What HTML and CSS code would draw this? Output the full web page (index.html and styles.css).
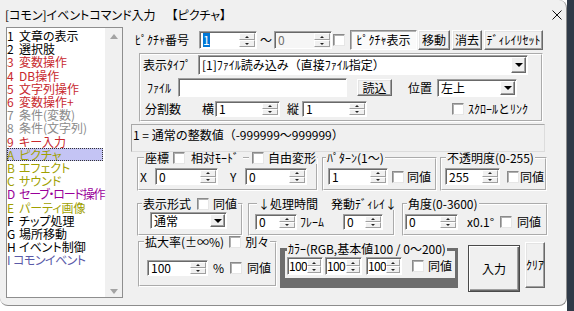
FILE: index.html
```html
<!DOCTYPE html>
<html lang="ja">
<head>
    <meta charset="UTF-8">
    <title>[コモン]イベントコマンド入力 【ピクチャ】</title>
    <link rel="stylesheet" href="styles.css">
</head>
<body>
    <div class="window">
        <div class="titlebar">
            <span class="title">[コモン]イベントコマンド入力<span class="sub">【ピクチャ】</span></span>
            <svg class="close" width="10" height="10" viewBox="0 0 10 10"><path d="M0.5 0.5L9.5 9.5M9.5 0.5L0.5 9.5" stroke="#111" stroke-width="1"/></svg>
        </div>
        <div class="client">
            <div class="cmdlist">
                <div class="items">
                    <div class="item"><span class="key">1</span>文章の表示</div>
                    <div class="item"><span class="key">2</span>選択肢</div>
                    <div class="item red"><span class="key">3</span>変数操作</div>
                    <div class="item red"><span class="key">4</span>DB操作</div>
                    <div class="item red"><span class="key">5</span>文字列操作</div>
                    <div class="item red"><span class="key">6</span>変数操作+</div>
                    <div class="item gray"><span class="key">7</span>条件(変数)</div>
                    <div class="item gray"><span class="key">8</span>条件(文字列)</div>
                    <div class="item red"><span class="key">9</span>キー入力</div>
                    <div class="item olive sel"><span class="key">A</span>ピクチャ</div>
                    <div class="item olive"><span class="key">B</span>エフェクト</div>
                    <div class="item olive"><span class="key">C</span>サウンド</div>
                    <div class="item purple"><span class="key">D</span><span class="tighter">セーブ・ロード操作</span></div>
                    <div class="item olive"><span class="key">E</span>パーティ画像</div>
                    <div class="item"><span class="key">F</span>チップ処理</div>
                    <div class="item"><span class="key">G</span>場所移動</div>
                    <div class="item"><span class="key">H</span>イベント制御</div>
                    <div class="item blue"><span class="key narrow">I</span><span class="tight">コモンイベント</span></div>
                </div>
                <div class="scrollbar"><span class="arrow-up"></span><span class="arrow-down"></span></div>
            </div>

            <div class="panel">
                <div class="row row-no">
                    <span class="lbl lbl-no">ﾋﾟｸﾁｬ番号</span>
                    <div class="spin spin-no"><span class="val"><span class="hl">1</span></span><span class="updown"><i></i><i></i></span></div>
                    <span class="lbl tilde">～</span>
                    <div class="spin spin-to off"><span class="val">0</span><span class="updown"><i></i><i></i></span></div>
                    <span class="chk chk-to"></span>
                    <span class="btn on btn-show">ﾋﾟｸﾁｬ表示</span>
                    <span class="btn btn-move">移動</span>
                    <span class="btn btn-erase">消去</span>
                    <span class="btn btn-reset">ﾃﾞｨﾚｲﾘｾｯﾄ</span>
                </div>

                <div class="group-type">
                    <div class="row row-type">
                        <span class="lbl lbl-type">表示ﾀｲﾌﾟ</span>
                        <div class="combo combo-type"><span class="val">[1]ﾌｧｲﾙ読み込み（直接ﾌｧｲﾙ指定）</span><span class="drop"></span></div>
                    </div>
                    <div class="row row-file">
                        <span class="lbl lbl-file">ﾌｧｲﾙ</span>
                        <div class="edit edit-file"></div>
                        <span class="btn btn-load">読込</span>
                        <span class="lbl lbl-pos">位置</span>
                        <div class="combo combo-pos"><span class="val">左上</span><span class="drop"></span></div>
                    </div>
                    <div class="row row-split">
                        <span class="lbl lbl-split">分割数</span>
                        <span class="lbl lbl-x">横</span>
                        <div class="spin spin-split"><span class="val">1</span><span class="updown"><i></i><i></i></span></div>
                        <span class="lbl lbl-y">縦</span>
                        <div class="spin spin-split"><span class="val">1</span><span class="updown"><i></i><i></i></span></div>
                        <span class="chk chk-scroll"></span>
                        <span class="lbl lbl-scroll">ｽｸﾛｰﾙとﾘﾝｸ</span>
                    </div>
                </div>

                <div class="desc">1 = 通常の整数値（-999999～999999）</div>

                <div class="row row-a">
                    <fieldset class="grp grp-coord">
                        <legend>座標<span class="chk lg-chk1"></span><span class="lg-rel">相対ﾓｰﾄﾞ</span><span class="seg"></span><span class="chk lg-chk2"></span><span class="lg-free">自由変形</span></legend>
                        <div class="grp-body">
                            <span class="lbl lbl-cx">X</span>
                            <div class="spin spin-cx"><span class="val">0</span><span class="updown"><i></i><i></i></span></div>
                            <span class="lbl lbl-cy">Y</span>
                            <div class="spin spin-cy"><span class="val">0</span><span class="updown"><i></i><i></i></span></div>
                        </div>
                    </fieldset>
                    <fieldset class="grp grp-pat">
                        <legend>ﾊﾟﾀｰﾝ(1～)</legend>
                        <div class="grp-body">
                            <div class="spin spin-pat"><span class="val">1</span><span class="updown"><i></i><i></i></span></div>
                            <span class="chk chk-same"></span>
                            <span class="lbl lbl-same">同値</span>
                        </div>
                    </fieldset>
                    <fieldset class="grp grp-alpha">
                        <legend>不透明度(0-255)</legend>
                        <div class="grp-body">
                            <div class="spin spin-alpha"><span class="val">255</span><span class="updown"><i></i><i></i></span></div>
                            <span class="chk chk-alpha"></span>
                            <span class="lbl lbl-same-a">同値</span>
                        </div>
                    </fieldset>
                </div>

                <div class="row row-b">
                    <fieldset class="grp grp-mode">
                        <legend>表示形式<span class="chk lg-chk-mode"></span><span class="lg-same">同値</span></legend>
                        <div class="grp-body">
                            <div class="combo combo-mode"><span class="val">通常</span><span class="drop"></span></div>
                        </div>
                    </fieldset>
                    <fieldset class="grp grp-wait">
                        <legend>↓処理時間<span class="lg-delay">発動ﾃﾞｨﾚｲ↓</span></legend>
                        <div class="grp-body">
                            <div class="spin spin-wait"><span class="val">0</span><span class="updown"><i></i><i></i></span></div>
                            <span class="lbl lbl-frame">ﾌﾚｰﾑ</span>
                            <div class="spin spin-delay"><span class="val">0</span><span class="updown"><i></i><i></i></span></div>
                        </div>
                    </fieldset>
                    <fieldset class="grp grp-angle">
                        <legend>角度(0-3600)</legend>
                        <div class="grp-body">
                            <div class="spin spin-angle"><span class="val">0</span><span class="updown"><i></i><i></i></span></div>
                            <span class="lbl lbl-unit">x0.1°</span>
                            <span class="chk"></span>
                            <span class="lbl lbl-same-g">同値</span>
                        </div>
                    </fieldset>
                </div>

                <div class="row row-c">
                    <fieldset class="grp grp-zoom">
                        <legend>拡大率(±∞%)<span class="chk lg-chk-zoom"></span><span class="lg-sep">別々</span></legend>
                        <div class="grp-body">
                            <div class="spin spin-zoom"><span class="val">100</span><span class="updown"><i></i><i></i></span></div>
                            <span class="lbl lbl-pct">%</span>
                            <span class="chk chk-zoom"></span>
                            <span class="lbl lbl-same-z">同値</span>
                        </div>
                    </fieldset>
                    <fieldset class="grp-color">
                        <legend>ｶﾗｰ(RGB,基本値100 / 0～200)</legend>
                        <div class="grp-body">
                            <div class="spin spin-rgb"><span class="val">100</span><span class="updown"><i></i><i></i></span></div>
                            <div class="spin spin-rgb rgb-g"><span class="val">100</span><span class="updown"><i></i><i></i></span></div>
                            <div class="spin spin-rgb rgb-b"><span class="val">100</span><span class="updown"><i></i><i></i></span></div>
                            <span class="chk chk-rgb"></span>
                            <span class="lbl lbl-same-c">同値</span>
                        </div>
                    </fieldset>
                    <span class="btn btn-ok">入力</span>
                    <span class="btn btn-clear">ｸﾘｱ</span>
                </div>
            </div>
        </div>
    </div>
</body>
</html>
```

FILE: styles.css
```css
* {
    box-sizing: border-box;
}
body {
    margin: 0;
    background: linear-gradient(to right, #ffffff 567px, #2f3a48 567px);
    font-family: "Noto Sans CJK JP", "Noto Sans", sans-serif;
    font-size: 12px;
    line-height: 14px;
    color: #000;
}
.window {
    width: 567px;
    height: 306px;
    background: #f0f0f0;
    border-right: 1px solid #8c8c8c;
    border-bottom: 1px solid #8c8c8c;
    border-radius: 0 8px 8px 8px;
    overflow: hidden;
}
.titlebar {
    display: flex;
    align-items: center;
    justify-content: space-between;
    height: 27px;
    padding: 3px 4px 0 5px;
}
.title {
    font-feature-settings: "palt";
}
.title .sub {
    margin-left: 16px;
}
.client {
    display: flex;
    padding-left: 6px;
}

/* command list */
.cmdlist {
    display: flex;
    width: 117px;
    height: 271px;
    border: 1px solid #8e8e8e;
}
.items {
    flex: 1;
    min-width: 0;
    padding-top: 1px;
    background: #fff;
    font-size: 12px;
    line-height: 13.2px;
    font-feature-settings: "palt";
    white-space: nowrap;
}
.item .key {
    display: inline-block;
    width: 12px;
}
.item .key.narrow {
    width: 6px;
}
.item .tight {
    letter-spacing: -0.5px;
}
.item .tighter {
    letter-spacing: -1.2px;
}
.item.sel {
    background: #c4c4f4;
    outline: 1px dotted #333;
    outline-offset: -1px;
    margin-right: 2px;
}
.red { color: #c8282d; }
.gray { color: #8a8a8a; }
.olive { color: #a0a000; }
.purple { color: #990099; }
.blue { color: #5a5aa8; }
.scrollbar {
    width: 17px;
    display: flex;
    flex-direction: column;
    justify-content: space-between;
    align-items: center;
    padding: 6px 0 3px;
}
.arrow-up,
.arrow-down {
    border-left: 4px solid transparent;
    border-right: 4px solid transparent;
}
.arrow-up { border-bottom: 5px solid #a3a3a3; }
.arrow-down { border-top: 5px solid #a3a3a3; }

/* controls */
.panel {
    width: 417px;
    margin-left: 8px;
    padding-top: 3px;
    display: flex;
    flex-direction: column;
}
.row {
    display: flex;
    align-items: center;
}
.lbl {
    white-space: nowrap;
}
.spin,
.combo,
.edit {
    display: flex;
    background: #fff;
    border: 1px solid;
    border-color: #a0a0a0 #fff #fff #a0a0a0;
    box-shadow: inset 1px 1px #696969;
}
.spin {
    height: 18px;
}
.spin .val,
.combo .val {
    flex: 1;
    display: flex;
    align-items: center;
    padding-left: 3px;
    line-height: 12px;
    white-space: nowrap;
}
.combo .val {
    overflow: hidden;
}
.spin.off {
    background: #f6f6f6;
    color: #707070;
}
.hl {
    background: #0078d7;
    color: #fff;
    padding: 1px 0;
}
.updown {
    width: 16px;
    margin: 1px 1px 1px 0;
    display: flex;
    flex-direction: column;
}
.updown i {
    flex: 1;
    display: flex;
    align-items: center;
    justify-content: center;
    background: #f0f0f0;
    border: 1px solid;
    border-color: #fff #a0a0a0 #a0a0a0 #fff;
}
.updown i::after {
    content: "";
    border-left: 2px solid transparent;
    border-right: 2px solid transparent;
    border-bottom: 2px solid #222;
}
.updown i + i::after {
    border-bottom: 0;
    border-top: 2px solid #222;
}
.combo {
    height: 20px;
}
.drop {
    width: 15px;
    margin: 1px;
    display: flex;
    align-items: center;
    justify-content: center;
    background: #f0f0f0;
    border: 1px solid;
    border-color: #fff #696969 #696969 #fff;
    box-shadow: inset -1px -1px #a0a0a0;
}
.drop::after {
    content: "";
    border-left: 4px solid transparent;
    border-right: 4px solid transparent;
    border-top: 4px solid #000;
}
.chk {
    display: inline-block;
    flex-shrink: 0;
    width: 12px;
    height: 12px;
    background: #fff;
    border: 1px solid;
    border-color: #8a8a8a #e6e6e6 #e6e6e6 #8a8a8a;
    box-shadow: inset 1px 1px #b0b0b0;
}
.btn {
    display: flex;
    align-items: center;
    justify-content: center;
    height: 20px;
    background: #f0f0f0;
    border: 1px solid;
    border-color: #fff #696969 #696969 #fff;
    box-shadow: inset -1px -1px #a0a0a0, inset 1px 1px #e3e3e3;
    white-space: nowrap;
}
.btn.on {
    background: #fafafa;
    border-color: #8a8a8a #fff #fff #8a8a8a;
    box-shadow: inset 1px 1px #b4b4b4;
}

/* row 1 */
.row-no { height: 20px; }
.lbl-no { margin-left: 4px; width: 64px; }
.spin-no, .spin-to { width: 58px; }
.tilde { margin-left: 3px; width: 14px; }
.chk-to { margin-left: 1px; }
.btn-show { margin-left: 5px; width: 67px; }
.btn-move { margin-left: 1px; width: 32px; }
.btn-erase { margin-left: 2px; width: 30px; }
.btn-reset { margin-left: 2px; width: 59px; }

/* display type group */
.group-type {
    display: flex;
    flex-direction: column;
    width: 404px;
    height: 69px;
    margin: 3px 0 0 8px;
    border: 2px groove #fff;
}
.row-type { height: 20px; }
.lbl-type { margin-left: 2px; width: 55px; }
.combo-type { width: 330px; }
.row-file { height: 19px; margin-top: 3px; }
.lbl-file { margin-left: 6px; width: 31px; }
.edit-file { width: 169px; height: 19px; }
.btn-load { margin-left: 10px; width: 35px; height: 17px; }
.lbl-pos { margin-left: 16px; width: 29px; }
.combo-pos { width: 80px; height: 18px; }
.row-split { height: 16px; margin-top: 4px; }
.lbl-split { margin-left: 4px; width: 57px; }
.lbl-x { width: 13px; }
.spin-split { width: 65px; height: 16px; }
.lbl-y { margin-left: 7px; width: 15px; }
.chk-scroll { margin-left: 85px; }
.lbl-scroll { margin-left: 4px; }

.desc {
    width: 414px;
    height: 28px;
    margin-top: 2px;
    padding: 3px 0 0 1px;
    border: 1px solid;
    border-color: #a8a8a8 #dcdcdc #dcdcdc #a8a8a8;
    white-space: nowrap;
}

/* group boxes */
.grp {
    margin: 0;
    padding: 0;
    min-width: 0;
    border: 2px groove #fff;
}
.grp legend,
.grp-color legend {
    display: flex;
    align-items: center;
    height: 12px;
    line-height: 12px;
    padding: 0 1px;
    white-space: nowrap;
}
.grp-body {
    display: flex;
    align-items: center;
}
.row-a,
.row-b,
.row-c {
    align-items: flex-start;
}

.grp-coord { width: 181px; height: 39px; margin-left: 6px; }
.grp-coord legend { margin-left: 5px; }
.lg-chk1 { margin-left: 4px; }
.lg-rel { margin-left: 6px; }
.seg {
    width: 6px;
    height: 2px;
    margin: 0 3px 0 4px;
    border-top: 1px solid #aaa;
    border-bottom: 1px solid #fff;
}
.lg-free { margin-left: 4px; }
.grp-coord .grp-body { padding-top: 4px; }
.lbl-cx { margin-left: 1px; width: 15px; }
.spin-cx { width: 63px; height: 17px; }
.lbl-cy { margin-left: 12px; width: 15px; }
.spin-cy { width: 62px; height: 17px; }

.grp-pat { width: 115px; height: 39px; margin-left: 4px; }
.grp-pat legend { margin-left: 2px; }
.grp-pat .grp-body { padding-top: 4px; }
.spin-pat { width: 60px; height: 17px; margin-left: 4px; }
.chk-same { margin-left: 4px; }
.lbl-same { margin-left: 3px; }

.grp-alpha { width: 107px; height: 39px; margin-left: 3px; }
.grp-alpha legend { margin-left: 4px; }
.grp-alpha .grp-body { padding-top: 4px; }
.spin-alpha { width: 55px; height: 17px; margin-left: 3px; }
.chk-alpha { margin-left: 7px; }
.lbl-same-a { margin-left: 1px; }

.row-b { margin-top: 7px; }
.grp-mode { width: 106px; height: 38px; margin-left: 6px; }
.grp-mode legend { margin-left: 3px; }
.lg-chk-mode { margin-left: 6px; }
.lg-same { margin-left: 4px; }
.grp-mode .grp-body { padding-top: 2px; }
.combo-mode { width: 77px; height: 17px; margin-left: 11px; }

.grp-wait { width: 147px; height: 38px; margin-left: 5px; }
.grp-wait legend { margin-left: 7px; }
.lg-delay { margin-left: 13px; }
.grp-wait .grp-body { padding-top: 4px; }
.spin-wait { width: 42px; height: 16px; margin-left: 5px; }
.lbl-frame { margin-left: 3px; width: 24px; }
.spin-delay { width: 40px; height: 16px; margin-left: 19px; }

.grp-angle { width: 146px; height: 38px; margin-left: 7px; }
.grp-angle legend { margin-left: 3px; }
.grp-angle .grp-body { padding-top: 4px; }
.spin-angle { width: 53px; height: 16px; margin-left: 1px; }
.lbl-unit { margin-left: 9px; width: 33px; }
.lbl-same-g { margin-left: 5px; }

.grp-zoom { width: 139px; height: 51px; margin-left: 7px; }
.grp-zoom legend { margin-left: 4px; }
.lg-chk-zoom { margin-left: 5px; }
.lg-sep { margin-left: 4px; }
.grp-zoom .grp-body { padding-top: 12px; }
.spin-zoom { width: 61px; height: 16px; margin-left: 7px; }
.lbl-pct { margin-left: 5px; width: 12px; }
.chk-zoom { margin-left: 5px; }
.lbl-same-z { margin-left: 5px; }

.grp-color {
    width: 178px;
    height: 45px;
    margin: 7px 0 0 3px;
    padding: 0;
    min-width: 0;
    border: solid #6d6d6d;
    border-width: 3px 3px 10px 5px;
}
.grp-color legend { margin-left: 2px; }
.grp-color .grp-body { padding: 2px 0 0 2px; }
.spin-rgb { width: 36px; }
.spin-rgb .val {
    padding-left: 1px;
    letter-spacing: -0.6px;
}
.spin-rgb .updown { width: 14px; }
.rgb-g { width: 37px; margin-left: 2px; }
.rgb-b { margin-left: 4px; }
.chk-rgb { margin-left: 10px; }
.lbl-same-c { margin-left: 4px; }

.btn-ok {
    width: 52px;
    height: 47px;
    margin: 9px 0 0 10px;
    border: 1px solid #4a4a4a;
    box-shadow: inset 1px 1px #fff, inset -1px -1px #696969, inset -2px -2px #a0a0a0;
}
.btn-clear {
    width: 20px;
    height: 46px;
    margin: 6px 0 0 5px;
}
```
